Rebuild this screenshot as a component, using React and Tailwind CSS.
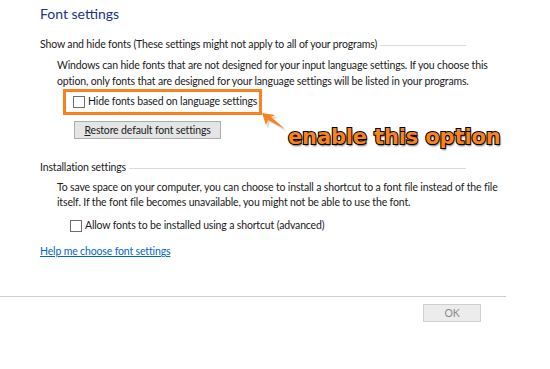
import React from 'react';

const ui = { fontFamily: 'Lato, "Noto Sans", sans-serif' };

function Checkbox() {
    return <span className="inline-block w-[12px] h-[12px] border border-[#6e6e6e] bg-white shrink-0" />;
}

function GroupHeader({ children }) {
    return (
        <div className="flex items-center gap-[3px] pr-[44px] h-[16px]">
            <span className="whitespace-nowrap">{children}</span>
            <span className="flex-1 h-px bg-[#dcdcdc]" />
        </div>
    );
}

export default function App() {
    return (
        <div className="relative w-[550px] h-[369px] bg-white text-[10.5px] tracking-[-0.15px] text-[#1a1a1a] overflow-hidden" style={ui}>
            <div className="px-[40px] pt-[4px]">
                <h1 className="text-[14px] tracking-normal text-[#1e3287] leading-[20px]">Font settings</h1>

                {/* Show and hide fonts */}
                <div className="mt-[13px]">
                    <GroupHeader>Show and hide fonts (These settings might not apply to all of your programs)</GroupHeader>
                    <p className="pl-[17px] mt-[4px] leading-[16px] whitespace-nowrap">
                        Windows can hide fonts that are not designed for your input language settings. If you choose this
                        <br />
                        option, only fonts that are designed for your language settings will be listed in your programs.
                    </p>
                    <div className="ml-[23px] w-[199px] h-[26px] border-[3px] border-[#f7821e] flex items-center gap-[3px] pl-[7px]">
                        <Checkbox />
                        <span className="whitespace-nowrap">Hide fonts based on language settings</span>
                    </div>
                    <button className="block ml-[34px] mt-[6px] w-[147px] h-[18px] border border-[#adadad] bg-[#e5e5e5] leading-none whitespace-nowrap">
                        <span className="underline">R</span>estore default font settings
                    </button>
                </div>

                {/* Installation settings */}
                <div className="mt-[21px]">
                    <GroupHeader>Installation settings</GroupHeader>
                    <p className="pl-[17px] mt-[4px] leading-[15px] whitespace-nowrap">
                        To save space on your computer, you can choose to install a shortcut to a font file instead of the file
                        <br />
                        itself. If the font file becomes unavailable, you might not be able to use the font.
                    </p>
                    <div className="ml-[30px] mt-[10px] h-[12px] flex items-center gap-[3px]">
                        <Checkbox />
                        <span className="whitespace-nowrap">Allow fonts to be installed using a shortcut (advanced)</span>
                    </div>
                </div>

                <a className="block mt-[11px] leading-[16px] text-[#0066cc] underline w-fit">Help me choose font settings</a>
            </div>

            <div className="mt-[37px] h-px bg-[#cccccc] w-[506px]" />
            <div className="flex pl-[423px] mt-[7px]">
                <button className="w-[58px] h-[18px] border border-[#cfcfcf] bg-[#ececec] text-[#8a8a8a] leading-none">OK</button>
            </div>

            {/* annotation callout */}
            <svg className="absolute left-[258px] top-[108px]" width="34" height="26" viewBox="0 0 34 26">
                <polygon points="5,6 9,20 11,13 28,23 15,10 19,8" fill="rgba(0,0,0,0.15)" transform="translate(1,1)" />
                <polygon points="4,5 8,17 10,12 27,21 13,9 17,7" fill="#f7821e" />
            </svg>
            <div
                className="absolute left-[288px] top-[124px] text-[21px] font-bold text-[#f7821e] whitespace-nowrap leading-[26px]"
                style={{ fontFamily: '"DejaVu Sans", sans-serif', WebkitTextStroke: '2px #000', paintOrder: 'stroke fill', textShadow: '1px 2px 2px rgba(0,0,0,0.6)' }}
            >
                enable this option
            </div>
        </div>
    );
}
